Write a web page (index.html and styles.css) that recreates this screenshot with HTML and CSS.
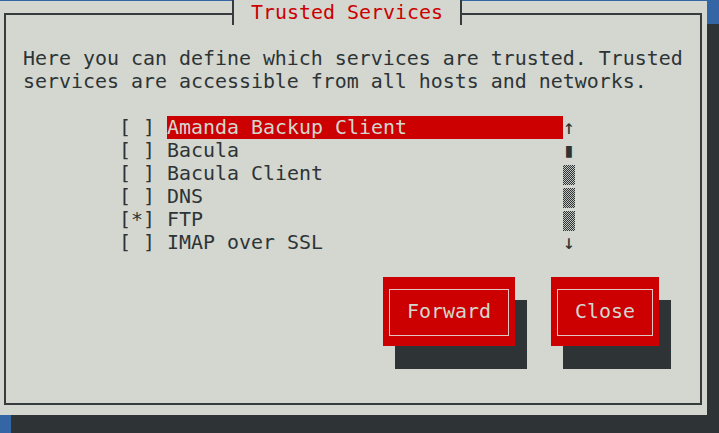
FILE: index.html
```html
<!DOCTYPE html>
<html lang="en">
<head>
<meta charset="utf-8">
<title>Trusted Services</title>
<link rel="stylesheet" href="styles.css">
</head>
<body>
<div class="window">
  <div class="title">Trusted Services</div>
  <div class="frame">
    <p class="intro">Here you can define which services are trusted. Trusted
services are accessible from all hosts and networks.</p>
    <div class="list">
      <span class="check">[ ]</span><span class="label selected">Amanda Backup Client</span><span class="scroll">↑</span>
      <span class="check">[ ]</span><span class="label">Bacula</span><span class="scroll">▮</span>
      <span class="check">[ ]</span><span class="label">Bacula Client</span><span class="scroll"><span class="shade"></span></span>
      <span class="check">[ ]</span><span class="label">DNS</span><span class="scroll"><span class="shade"></span></span>
      <span class="check">[*]</span><span class="label">FTP</span><span class="scroll"><span class="shade"></span></span>
      <span class="check">[ ]</span><span class="label">IMAP over SSL</span><span class="scroll">↓</span>
    </div>
    <div class="buttons">
      <div class="btn"><span class="btn-inner">Forward</span></div>
      <div class="btn"><span class="btn-inner">Close</span></div>
    </div>
  </div>
</div>
</body>
</html>
```

FILE: styles.css
```css
html, body {
  margin: 0;
  padding: 0;
}

body {
  width: 719px;
  height: 433px;
  overflow: hidden;
  background: #3465a4;
  font-family: "DejaVu Sans Mono", "Liberation Mono", monospace;
  font-size: 19.93px;
  line-height: 23px;
  color: #2e3436;
}

.window {
  position: relative;
  box-sizing: border-box;
  width: 708px;
  height: 414px;
  margin: 1px 0 0 -1px;
  padding: 12px 5px 10px 5px;
  background: #d3d7cf;
  box-shadow: 12px 23px 0 #2e3436;
}

.frame {
  box-sizing: border-box;
  height: 100%;
  border: 2px solid #363c3e;
}

.title {
  position: absolute;
  top: -1px;
  left: 233px;
  box-sizing: border-box;
  width: 230px;
  height: 25px;
  padding: 1px 0 0 17px;
  border-left: 2px solid #363c3e;
  border-right: 2px solid #363c3e;
  background: #d3d7cf;
  color: #cc0000;
  white-space: pre;
}

.intro {
  margin: 32px 0 0 17px;
  white-space: pre;
}

.list {
  display: grid;
  grid-template-columns: 48px 396px 12px;
  grid-auto-rows: 23px;
  margin: 23px 0 0 113px;
}

.check,
.label {
  white-space: pre;
}

.label.selected {
  background: #cc0000;
  color: #d3d7cf;
}

.scroll {
  text-align: center;
}

.shade {
  display: block;
  width: 12px;
  height: 20px;
  margin-top: 3px;
  background-image: repeating-conic-gradient(#2e3436 0 25%, #c4c8c0 0 50%);
  background-size: 2px 2px;
}

.buttons {
  display: flex;
  gap: 36px;
  margin: 23px 0 0 377px;
}

.btn {
  box-sizing: border-box;
  height: 69px;
  padding: 12px 6px 10px 6px;
  background: #cc0000;
  color: #d3d7cf;
  box-shadow: 12px 23px 0 #2e3436;
}

.btn-inner {
  display: block;
  box-sizing: border-box;
  height: 47px;
  padding: 10px 17px 12px 17px;
  border: 1px solid #e2c6c4;
  white-space: pre;
}
```
